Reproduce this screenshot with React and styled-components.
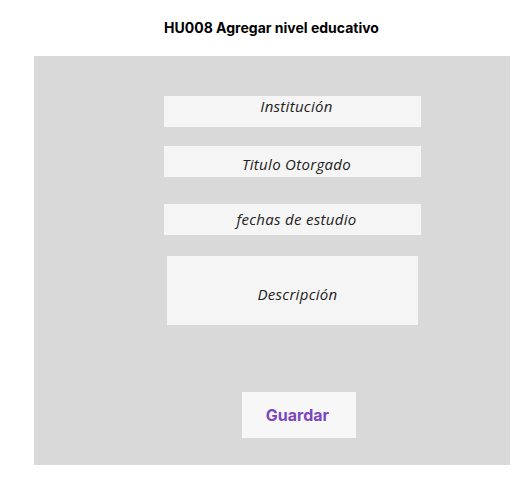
import React from 'react';
import styled, { createGlobalStyle } from 'styled-components';

const GlobalStyle = createGlobalStyle`
  body {
    margin: 0;
    background: #fff;
    font-family: Inter, "Noto Sans", sans-serif;
  }
`;

const Page = styled.div`
  width: 531px;
  height: 500px;
`;

const Title = styled.h1`
  margin: 0;
  height: 56px;
  display: flex;
  align-items: center;
  justify-content: center;
  padding-left: 12px;
  padding-bottom: 2px;
  box-sizing: border-box;
  font-size: 14px;
  font-weight: 700;
  color: #000;
`;

const Panel = styled.div`
  margin-left: 34px;
  width: 476px;
  height: 409px;
  background: #d9d9d9;
  display: flex;
  flex-direction: column;
  align-items: flex-start;
  padding-top: 40px;
  box-sizing: border-box;
`;

const Field = styled.div`
  margin-top: ${p => p.$mt || 0}px;
  margin-left: ${p => p.$ml || 130}px;
  width: ${p => p.$w || 257}px;
  height: ${p => p.$h || 31}px;
  background: #f5f5f5;
  box-sizing: border-box;
  padding-top: ${p => p.$pt || 0}px;
  padding-left: ${p => p.$pl || 8}px;
  display: flex;
  justify-content: center;
  align-items: flex-start;
  font-family: "Open Sans", "Noto Sans", sans-serif;
  font-style: italic;
  font-weight: 400;
  font-size: 15px;
  letter-spacing: 0.3px;
  line-height: 20px;
  color: #222;
`;

const SaveButton = styled.button`
  margin-top: 67px;
  margin-left: 208px;
  width: 114px;
  height: 46px;
  border: none;
  padding: 0 3px 0 0;
  background: #f7f7f7;
  color: #7b47bd;
  font-family: Inter, sans-serif;
  font-weight: 700;
  font-size: 16px;
  cursor: pointer;
`;

export default function App() {
  return (
    <Page>
      <GlobalStyle />
      <Title>HU008 Agregar nivel educativo</Title>
      <Panel>
        <Field $pt={0}>Institución</Field>
        <Field $mt={19} $pt={8}>Titulo Otorgado</Field>
        <Field $mt={27} $pt={5}>fechas de estudio</Field>
        <Field $mt={21} $ml={133} $w={251} $h={69} $pt={28} $pl={10}>Descripción</Field>
        <SaveButton>Guardar</SaveButton>
      </Panel>
    </Page>
  );
}
